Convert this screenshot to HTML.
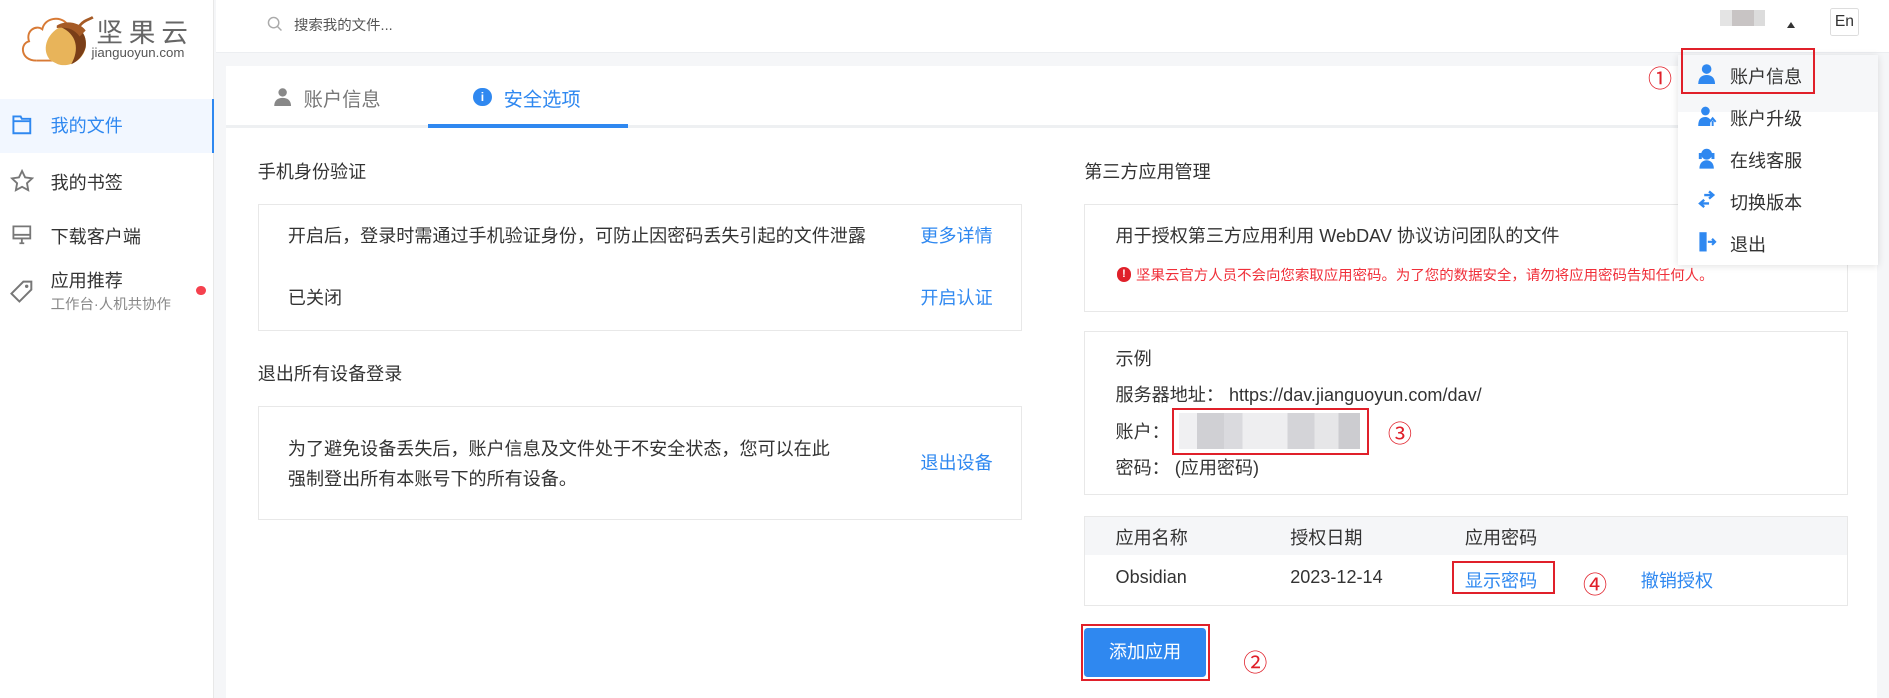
<!DOCTYPE html>
<html><head><meta charset="utf-8"><style>
*{margin:0;padding:0;box-sizing:border-box}
html,body{width:1889px;height:698px;overflow:hidden;background:#f5f6f8}
#z{zoom:1.2047;width:1568px;height:580px;position:relative;font-family:"Liberation Sans","Noto Sans CJK SC",sans-serif;color:#333;font-size:15px}
.a{position:absolute;white-space:nowrap}
.blue{color:#2f88f0}
.box{position:absolute;border:1px solid #e8e8e8;background:#fff}
.rb{position:absolute;border:2px solid #e0202a}
.num{position:absolute;color:#e0202a;font-size:20px}
.mi{position:absolute;left:1436px;font-size:15px;color:#333}
</style></head><body><div id="z">
<!-- sidebar -->
<div class="a" style="left:0;top:0;width:178px;height:580px;background:#fff;border-right:1px solid #e8e8e8"></div>
<svg class="a" style="left:14px;top:8px" width="72" height="50" viewBox="0 0 72 50">
<path d="M16 42 C3 42 2 28 10 26 C7 17 16 12 21 16 C23 6 36 5 41 11" fill="none" stroke="#d87a35" stroke-width="1.6"/>
<path d="M16 42 L34 42" stroke="#d87a35" stroke-width="1.6"/>
<path d="M28 42 C20 34 24 20 36 14 C48 9 59 18 57 31 C55 42 43 48 34 45 Z" fill="#e8b45a"/>
<path d="M36 14 C48 9 59 18 57 31 C55 38 50 43 45 45 C52 33 50 20 36 14 Z" fill="#7a3e18"/>
<path d="M33 13 C40 8 52 10 57 17 L52 22 C47 15 40 14 33 15 Z" fill="#a55a25"/>
<path d="M52 13 C56 8 60 8 63 6" fill="none" stroke="#a55a25" stroke-width="2.2"/>
</svg>
<div class="a" style="left:80px;top:9px;font-size:22px;color:#666;letter-spacing:5px">坚果云</div>
<div class="a" style="left:76px;top:37px;font-size:11px;color:#555">jianguoyun.com</div>
<div class="a" style="left:0;top:82px;width:178px;height:45px;background:#f2f7ff;border-right:2px solid #2f88f0"></div>
<svg class="a" style="left:9px;top:95px" width="18" height="18" viewBox="0 0 18 18"><path d="M2 2h6l1 2h7v12H2z M2 6h14" fill="none" stroke="#2f88f0" stroke-width="1.6"/></svg>
<div class="a blue" style="left:42px;top:93px">我的文件</div>
<svg class="a" style="left:8px;top:140px" width="20" height="20" viewBox="0 0 18 18"><path d="M9 1.5l2.3 4.8 5.2.7-3.8 3.6.9 5.2L9 13.3l-4.6 2.5.9-5.2L1.5 7l5.2-.7z" fill="none" stroke="#777" stroke-width="1.4"/></svg>
<div class="a" style="left:42px;top:140px">我的书签</div>
<svg class="a" style="left:9px;top:186px" width="18" height="18" viewBox="0 0 18 18"><path d="M2 2h14v10H2z M7 16h4 M9 12v4 M2 9h14" fill="none" stroke="#777" stroke-width="1.5"/></svg>
<div class="a" style="left:42px;top:185px">下载客户端</div>
<svg class="a" style="left:8px;top:232px" width="20" height="22" viewBox="0 0 18 20"><path d="M10 2h6v6l-9 9-6-6z" fill="none" stroke="#777" stroke-width="1.5"/><circle cx="12.5" cy="5.5" r="1.3" fill="#777"/></svg>
<div class="a" style="left:42px;top:222px">应用推荐</div>
<div class="a" style="left:42px;top:243px;font-size:12px;color:#888">工作台·人机共协作</div>
<div class="a" style="left:163px;top:237px;width:8px;height:8px;border-radius:50%;background:#f5414e"></div>
<!-- top bar -->
<div class="a" style="left:179px;top:0;width:1389px;height:44px;background:#fff;border-bottom:1px solid #eceef1"></div>
<svg class="a" style="left:222px;top:13px" width="13" height="13" viewBox="0 0 13 13"><circle cx="5.5" cy="5.5" r="4.3" fill="none" stroke="#aaa" stroke-width="1.2"/><path d="M8.7 8.7l3.3 3.3" stroke="#aaa" stroke-width="1.2"/></svg>
<div class="a" style="left:244px;top:12px;font-size:12px;color:#555">搜索我的文件...</div>
<div class="a" style="left:1428px;top:8px;width:10px;height:14px;background:#e4e4e4"></div>
<div class="a" style="left:1438px;top:8px;width:18px;height:14px;background:#c8c4c4"></div>
<div class="a" style="left:1456px;top:8px;width:9px;height:14px;background:#dcdcdc"></div>
<div class="a" style="left:1483px;top:18px;width:0;height:0;border-left:4px solid transparent;border-right:4px solid transparent;border-bottom:5px solid #333"></div>
<div class="a" style="left:1519px;top:7px;width:24px;height:23px;border:1px solid #ddd;border-radius:2px;font-size:13px;text-align:center;line-height:21px">En</div>
<!-- card -->
<div class="a" style="left:188px;top:55px;width:1370px;height:525px;background:#fff"></div>
<div class="a" style="left:188px;top:104px;width:1370px;height:2px;background:#eef0f2"></div>
<svg class="a" style="left:227px;top:72px" width="16" height="16" viewBox="0 0 16 16"><circle cx="8" cy="4.5" r="3.5" fill="#888"/><path d="M1 16c0-5 3-7 7-7s7 2 7 7z" fill="#888"/></svg>
<div class="a" style="left:252px;top:70px;font-size:16px;color:#777">账户信息</div>
<div class="a" style="left:355px;top:103px;width:166px;height:3px;background:#2f88f0"></div>
<div class="a" style="left:393px;top:73px;width:15px;height:15px;border-radius:50%;background:#2f88f0;color:#fff;font-size:10px;text-align:center;line-height:15px;font-weight:bold">i</div>
<div class="a blue" style="left:418px;top:70px;font-size:16px">安全选项</div>
<!-- left column -->
<div class="a" style="left:214px;top:131px">手机身份验证</div>
<div class="box" style="left:214px;top:169px;width:634px;height:106px"></div>
<div class="a" style="left:239px;top:184px">开启后，登录时需通过手机验证身份，可防止因密码丢失引起的文件泄露</div>
<div class="a blue" style="left:764px;top:184px">更多详情</div>
<div class="a" style="left:239px;top:236px">已关闭</div>
<div class="a blue" style="left:764px;top:236px">开启认证</div>
<div class="a" style="left:214px;top:299px">退出所有设备登录</div>
<div class="box" style="left:214px;top:337px;width:634px;height:95px"></div>
<div class="a" style="left:239px;top:361px">为了避免设备丢失后，账户信息及文件处于不安全状态，您可以在此</div>
<div class="a" style="left:239px;top:386px">强制登出所有本账号下的所有设备。</div>
<div class="a blue" style="left:764px;top:373px">退出设备</div>
<!-- right column -->
<div class="a" style="left:900px;top:131px">第三方应用管理</div>
<div class="box" style="left:900px;top:169px;width:634px;height:90px"></div>
<div class="a" style="left:926px;top:184px">用于授权第三方应用利用 WebDAV 协议访问团队的文件</div>
<div class="a" style="left:927px;top:222px;width:12px;height:12px;border-radius:50%;background:#e0202a;color:#fff;font-size:9px;text-align:center;line-height:12px;font-weight:bold">!</div>
<div class="a" style="left:943px;top:219px;font-size:12px;color:#f0303a">坚果云官方人员不会向您索取应用密码。为了您的数据安全，请勿将应用密码告知任何人。</div>
<div class="box" style="left:900px;top:275px;width:634px;height:136px"></div>
<div class="a" style="left:926px;top:286px">示例</div>
<div class="a" style="left:926px;top:316px">服务器地址：&nbsp;https://dav.jianguoyun.com/dav/</div>
<div class="a" style="left:926px;top:347px">账户：</div>
<div class="a" style="left:979px;top:343px;width:150px;height:30px;background:linear-gradient(90deg,#f0f0f2 0 10%,#d0d0d4 10% 25%,#dadade 25% 35%,#eeeef0 35% 60%,#d4d4d8 60% 75%,#e6e6e8 75% 88%,#ccccd0 88%)"></div>
<div class="rb" style="left:973px;top:339px;width:163px;height:39px"></div>
<div class="num" style="left:1152px;top:344px">③</div>
<div class="a" style="left:926px;top:377px">密码：&nbsp;(应用密码)</div>
<div class="a" style="left:900px;top:428px;width:634px;height:75px;border:1px solid #e8e8e8;background:#fff"></div>
<div class="a" style="left:901px;top:429px;width:632px;height:32px;background:#f5f6f8"></div>
<div class="a" style="left:926px;top:435px">应用名称</div>
<div class="a" style="left:1071px;top:435px">授权日期</div>
<div class="a" style="left:1216px;top:435px">应用密码</div>
<div class="a" style="left:926px;top:471px">Obsidian</div>
<div class="a" style="left:1071px;top:471px">2023-12-14</div>
<div class="a blue" style="left:1216px;top:471px">显示密码</div>
<div class="rb" style="left:1205px;top:466px;width:86px;height:27px"></div>
<div class="num" style="left:1314px;top:469px">④</div>
<div class="a blue" style="left:1362px;top:471px">撤销授权</div>
<div class="a" style="left:900px;top:521px;width:101px;height:41px;background:#2f88f0;border-radius:3px;color:#fff;text-align:center;line-height:41px">添加应用</div>
<div class="rb" style="left:897px;top:518px;width:107px;height:47px"></div>
<div class="num" style="left:1032px;top:534px">②</div>
<!-- dropdown -->
<div class="a" style="left:1393px;top:46px;width:166px;height:174px;background:#fff;box-shadow:0 1px 6px rgba(0,0,0,.12)"></div>
<div class="a" style="left:1393px;top:46px;width:166px;height:47px;background:#f6f7f9"></div>
<svg class="a" style="left:1409px;top:52px" width="16" height="18" viewBox="0 0 16 18"><circle cx="8" cy="5" r="4" fill="#2f88f0"/><path d="M1 18c0-6 3-8 7-8s7 2 7 8z" fill="#2f88f0"/></svg>
<div class="mi" style="top:52px">账户信息</div>
<svg class="a" style="left:1409px;top:87px" width="16" height="18" viewBox="0 0 16 18"><circle cx="7" cy="5" r="3.6" fill="#2f88f0"/><path d="M1 18c0-6 2-8 6-8 2 0 3 1 4 2v6z" fill="#2f88f0"/><path d="M13 18v-5M10.5 14l2.5-3 2.5 3" stroke="#2f88f0" stroke-width="1.6" fill="none"/></svg>
<div class="mi" style="top:87px">账户升级</div>
<svg class="a" style="left:1409px;top:122px" width="16" height="18" viewBox="0 0 16 18"><circle cx="8" cy="6" r="4.5" fill="#2f88f0"/><rect x="1.5" y="5" width="2.5" height="5" fill="#2f88f0"/><rect x="12" y="5" width="2.5" height="5" fill="#2f88f0"/><path d="M2 18c0-5 3-7 6-7s6 2 6 7z" fill="#2f88f0"/></svg>
<div class="mi" style="top:122px">在线客服</div>
<svg class="a" style="left:1409px;top:157px" width="16" height="18" viewBox="0 0 16 18"><path d="M6 5h7M10 2l3.5 3L10 8M10 12H3M6 9l-3.5 3L6 15" stroke="#2f88f0" stroke-width="2" fill="none"/></svg>
<div class="mi" style="top:157px">切换版本</div>
<svg class="a" style="left:1409px;top:192px" width="16" height="18" viewBox="0 0 16 18"><path d="M2 1h6v16H2z" fill="#2f88f0"/><path d="M9 9h6M12.5 6.5L15 9l-2.5 2.5" stroke="#2f88f0" stroke-width="1.8" fill="none"/></svg>
<div class="mi" style="top:192px">退出</div>
<div class="rb" style="left:1395px;top:40px;width:112px;height:38px"></div>
<div class="num" style="left:1368px;top:49px">①</div>
</div></body></html>
